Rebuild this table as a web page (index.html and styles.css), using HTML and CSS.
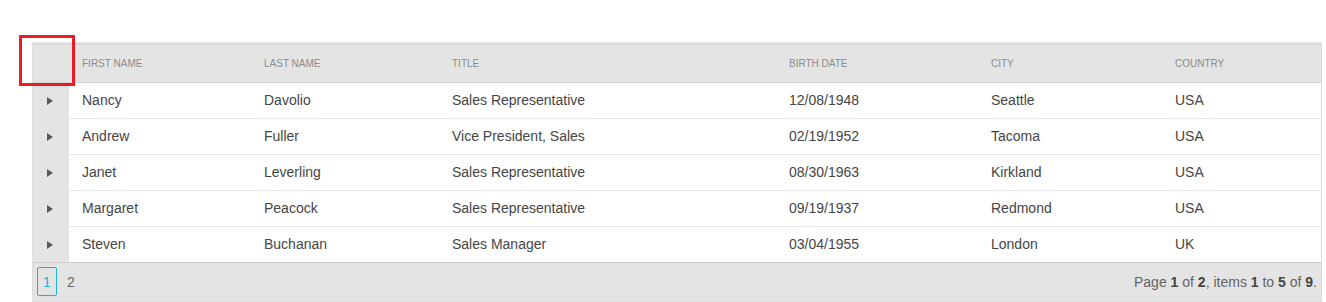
FILE: index.html
```html
<!DOCTYPE html>
<html>
<head>
<meta charset="utf-8">
<link rel="stylesheet" href="styles.css">
</head>
<body>
<div class="page">
  <div class="grid">
    <table class="grid-table">
      <colgroup>
        <col class="c-h"><col class="c-1"><col class="c-2"><col class="c-3"><col class="c-4"><col class="c-5"><col class="c-6">
      </colgroup>
      <thead>
        <tr>
          <th class="hier"></th>
          <th>First Name</th>
          <th>Last Name</th>
          <th>Title</th>
          <th>Birth Date</th>
          <th>City</th>
          <th>Country</th>
        </tr>
      </thead>
      <tbody>
        <tr><td class="hier"><span class="expand"></span></td><td>Nancy</td><td>Davolio</td><td>Sales Representative</td><td>12/08/1948</td><td>Seattle</td><td>USA</td></tr>
        <tr><td class="hier"><span class="expand"></span></td><td>Andrew</td><td>Fuller</td><td>Vice President, Sales</td><td>02/19/1952</td><td>Tacoma</td><td>USA</td></tr>
        <tr><td class="hier"><span class="expand"></span></td><td>Janet</td><td>Leverling</td><td>Sales Representative</td><td>08/30/1963</td><td>Kirkland</td><td>USA</td></tr>
        <tr><td class="hier"><span class="expand"></span></td><td>Margaret</td><td>Peacock</td><td>Sales Representative</td><td>09/19/1937</td><td>Redmond</td><td>USA</td></tr>
        <tr><td class="hier"><span class="expand"></span></td><td>Steven</td><td>Buchanan</td><td>Sales Manager</td><td>03/04/1955</td><td>London</td><td>UK</td></tr>
      </tbody>
    </table>
    <div class="pager">
      <div class="pages">
        <span class="pg current">1</span>
        <span class="pg">2</span>
      </div>
      <div class="info">Page <b>1</b> of <b>2</b>, items <b>1</b> to <b>5</b> of <b>9</b>.</div>
    </div>
    <div class="highlight"></div>
  </div>
</div>
</body>
</html>
```
FILE: styles.css
```css
html, body {
  margin: 0;
  padding: 0;
  background: #ffffff;
}
body {
  font-family: "Liberation Sans", Arial, sans-serif;
  color: #444444;
}
.page {
  padding: 42px 4px 0 32px;
}
.grid {
  position: relative;
  width: 1290px;
  border: 1px solid #dcdcdc;
  border-top-color: #e6e6e6;
  box-sizing: border-box;
  background: #e4e4e4;
}
.grid-table {
  width: 100%;
  border-collapse: collapse;
  table-layout: fixed;
}
.c-h { width: 36px; }
.c-1 { width: 182px; }
.c-2 { width: 188px; }
.c-3 { width: 337px; }
.c-4 { width: 202px; }
.c-5 { width: 184px; }
.c-6 { width: auto; }
thead th {
  height: 38px;
  padding: 0 0 0 13px;
  text-align: left;
  font-weight: normal;
  font-size: 10px;
  text-transform: uppercase;
  color: #8c8c8c;
  background: #e4e4e4;
  border-top: 2px solid #dadada;
  border-bottom: 1px solid #d4d4d4;
  box-sizing: border-box;
}
tbody td {
  height: 36px;
  padding: 0 0 0 13px;
  font-size: 14px;
  color: #454545;
  background: #ffffff;
  border-bottom: 1px solid #e6e6e6;
  box-sizing: border-box;
  white-space: nowrap;
}
tbody tr:last-child td {
  border-bottom: 1px solid #cfcfcf;
}
.grid-table .hier {
  padding: 0 2px 0 0;
  background: #e4e4e4;
  text-align: center;
}
tbody td.hier {
  border-bottom-color: #e4e4e4;
}
tbody tr:last-child td.hier {
  border-bottom-color: #cfcfcf;
}
.expand {
  display: inline-block;
  width: 0;
  height: 0;
  border-top: 4px solid transparent;
  border-bottom: 4px solid transparent;
  border-left: 6px solid #5a5a5a;
  vertical-align: middle;
}
.pager {
  display: flex;
  justify-content: space-between;
  align-items: center;
  height: 38px;
  padding: 0 4px 0 4px;
  background: #e4e4e4;
}
.pages {
  display: flex;
  align-items: center;
  gap: 4px;
}
.pg {
  display: inline-flex;
  align-items: center;
  justify-content: center;
  width: 20px;
  height: 29px;
  box-sizing: border-box;
  font-size: 14px;
  color: #656565;
}
.pg.current {
  border: 1px solid #1cb4d0;
  border-radius: 2px;
  color: #1cb4d0;
}
.info {
  font-size: 14px;
  color: #656565;
}
.info b {
  color: #444444;
}
.highlight {
  position: absolute;
  left: -14px;
  top: -8px;
  width: 56px;
  height: 51px;
  border: 3px solid #ec1c24;
  box-sizing: border-box;
  pointer-events: none;
}
```
